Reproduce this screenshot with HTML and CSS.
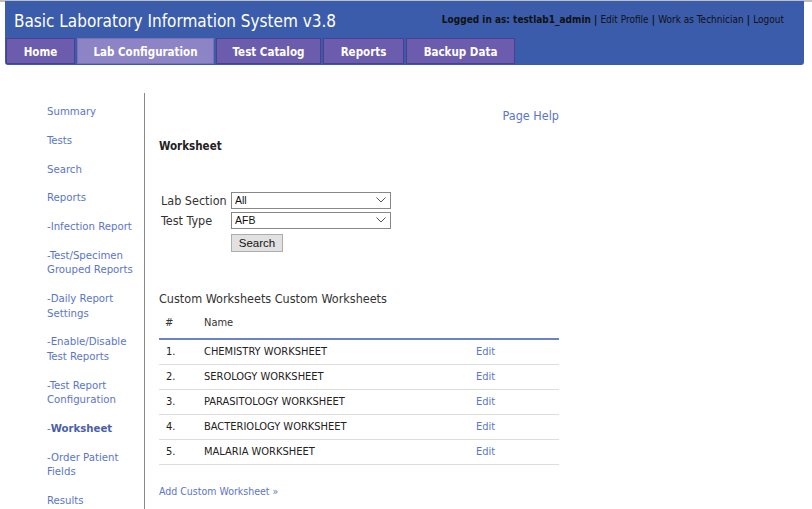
FILE: index.html
```html
<!DOCTYPE html>
<html>
<head>
<meta charset="utf-8">
<link rel="stylesheet" href="styles.css">
</head>
<body>
<div class="topline"></div>
<header class="header">
  <div class="header-top">
    <div class="title">Basic Laboratory Information System v3.8</div>
    <div class="userbar">Logged in as: testlab1_admin | <a>Edit Profile</a> | <a>Work as Technician</a> | <a>Logout</a></div>
  </div>
  <nav class="tabs">
    <a class="tab tab-home">Home</a>
    <a class="tab tab-lab active">Lab Configuration</a>
    <a class="tab tab-cat">Test Catalog</a>
    <a class="tab tab-rep">Reports</a>
    <a class="tab tab-bak">Backup Data</a>
  </nav>
</header>
<div class="page">
  <aside class="sidebar">
    <a class="nav">Summary</a>
    <a class="nav">Tests</a>
    <a class="nav">Search</a>
    <a class="nav">Reports</a>
    <a class="nav">-Infection Report</a>
    <a class="nav">-Test/Specimen Grouped Reports</a>
    <a class="nav">-Daily Report Settings</a>
    <a class="nav">-Enable/Disable Test Reports</a>
    <a class="nav">-Test Report Configuration</a>
    <a class="nav">-<b>Worksheet</b></a>
    <a class="nav">-Order Patient Fields</a>
    <a class="nav">Results</a>
  </aside>
  <main class="main">
    <div class="help-row"><a class="help">Page Help</a></div>
    <h2 class="heading">Worksheet</h2>
    <form class="form">
      <div class="form-row">
        <label class="lbl">Lab Section</label>
        <div class="select"><span>All</span><svg width="10" height="6" viewBox="0 0 10 6"><path d="M0.5 0.5 L5 5 L9.5 0.5" fill="none" stroke="#555" stroke-width="1"/></svg></div>
      </div>
      <div class="form-row">
        <label class="lbl">Test Type</label>
        <div class="select"><span>AFB</span><svg width="10" height="6" viewBox="0 0 10 6"><path d="M0.5 0.5 L5 5 L9.5 0.5" fill="none" stroke="#555" stroke-width="1"/></svg></div>
      </div>
      <div class="form-row">
        <span class="lbl"></span>
        <button type="button" class="btn">Search</button>
      </div>
    </form>
    <div class="subhead">Custom Worksheets Custom Worksheets</div>
    <table class="tbl">
      <thead><tr><th class="c-num">#</th><th class="c-name">Name</th><th class="c-edit"></th></tr></thead>
      <tbody>
        <tr><td>1.</td><td>CHEMISTRY WORKSHEET</td><td><a>Edit</a></td></tr>
        <tr><td>2.</td><td>SEROLOGY WORKSHEET</td><td><a>Edit</a></td></tr>
        <tr><td>3.</td><td>PARASITOLOGY WORKSHEET</td><td><a>Edit</a></td></tr>
        <tr><td>4.</td><td>BACTERIOLOGY WORKSHEET</td><td><a>Edit</a></td></tr>
        <tr><td>5.</td><td>MALARIA WORKSHEET</td><td><a>Edit</a></td></tr>
      </tbody>
    </table>
    <a class="add">Add Custom Worksheet »</a>
  </main>
</div>
</body>
</html>
```
FILE: styles.css
```css
* { box-sizing: border-box; }
html, body { margin: 0; padding: 0; background: #fff; }
body {
  font-family: "DejaVu Sans Condensed", "DejaVu Sans", sans-serif;
  font-size: 11px;
  color: #222;
  height: 509px;
  overflow: hidden;
}
a { text-decoration: none; cursor: pointer; }
.topline { height: 2px; background: #bfbfbf; }
.header {
  margin: -1px 8px 0 5px;
  height: 64px;
  background: #3b5cab;
  border-radius: 0 0 3px 3px;
  display: flex;
  flex-direction: column;
  padding: 0 0 0 1px;
}
.header-top {
  height: 37px;
  display: flex;
  align-items: center;
  justify-content: space-between;
  padding: 0 20px 0 8px;
}
.title {
  color: #fff;
  font-size: 17px;
  letter-spacing: 0;
  padding-top: 2px;
}
.userbar {
  font-size: 10px;
  font-weight: bold;
  color: #111;
}
.userbar a { color: #111; font-weight: normal; }
.tabs { display: flex; gap: 2px; height: 26px; }
.tab {
  display: flex;
  align-items: center;
  justify-content: center;
  background: #6b5cad;
  border: 1px solid #4d3f8d;
  color: #fff;
  font-weight: bold;
  font-size: 11.5px;
  padding-top: 1px;
}
.tab.active { background: #8d84c6; border-color: #7a70b8; }
.tab-home { width: 69px; }
.tab-lab { width: 137px; }
.tab-cat { width: 105px; }
.tab-rep { width: 81px; }
.tab-bak { width: 109px; }
.page { display: flex; padding-top: 28px; }
.sidebar {
  width: 145px;
  border-right: 1px solid #888;
  padding: 12px 8px 0 47px;
  display: flex;
  flex-direction: column;
  min-height: 430px;
}
.nav {
  color: #5b76c8;
  font-size: 11.3px;
  line-height: 14.4px;
  margin-bottom: 14.4px;
}
.nav b { color: #4a5fa8; }
.main { width: 414px; padding: 15px 0 0 14px; }
.help-row { display: flex; justify-content: flex-end; }
.help { color: #5b76c8; font-size: 12.5px; }
.heading { font-size: 11.5px; font-weight: bold; margin: 16px 0 0 0; color: #222; }
.form { margin-top: 37px; margin-left: 2px; }
.form-row { display: flex; align-items: center; height: 20px; }
.lbl { width: 70px; font-size: 12.5px; color: #333; }
.select {
  width: 160px;
  height: 17px;
  border: 1px solid #888;
  background: #fff;
  display: flex;
  align-items: center;
  justify-content: space-between;
  padding: 0 4px 0 3px;
  font-family: "Liberation Sans", Arial, sans-serif;
  font-size: 10.5px;
  color: #111;
}
.btn {
  font-family: "Liberation Sans", Arial, sans-serif;
  font-size: 11.5px;
  height: 18px;
  width: 52px;
  padding: 0;
  border: 1px solid #adadad;
  background: #e1e1e1;
  color: #111;
  margin-top: 5px;
}
.subhead { font-size: 12.5px; margin-top: 41px; color: #333; }
.tbl {
  width: 400px;
  border-collapse: collapse;
  margin-top: 8px;
  font-size: 11px;
}
.tbl th {
  text-align: left;
  font-weight: normal;
  color: #333;
  height: 25px;
  padding: 0 0 7px 0;
  border-bottom: 2px solid #6a82c6;
}
.tbl th.c-num { width: 45px; padding-left: 6px; }
.tbl th.c-name { width: 272px; }
.tbl td {
  height: 25px;
  border-bottom: 1px solid #ddd;
  padding: 0;
  color: #222;
}
.tbl td:first-child { padding-left: 7px; }
.tbl td a { color: #5b76c8; }
.add { display: inline-block; color: #5b76c8; margin-top: 20px; font-size: 10.5px; }
```
